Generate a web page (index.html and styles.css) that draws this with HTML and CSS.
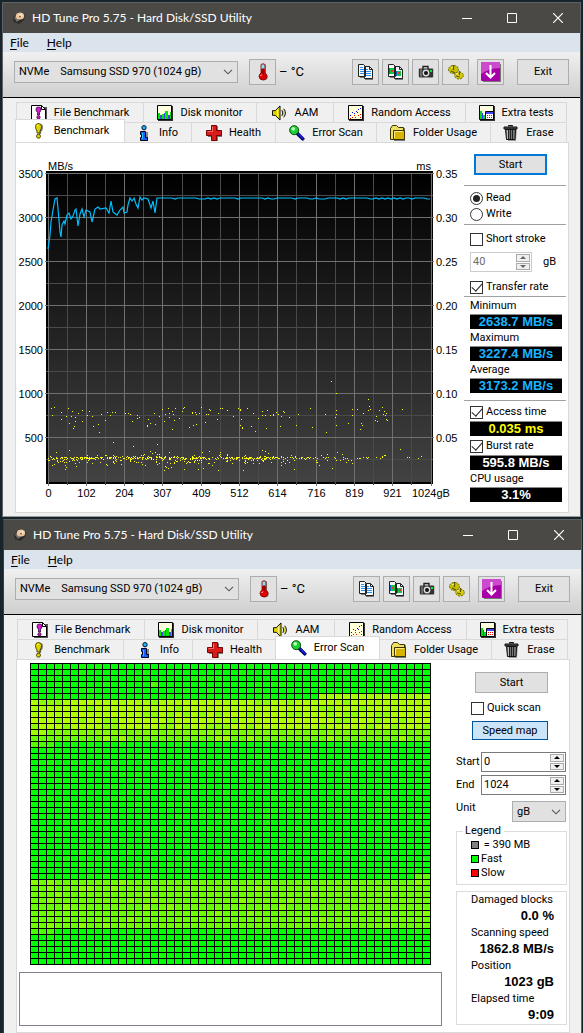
FILE: index.html
```html
<!DOCTYPE html>
<html lang="en">
<head>
<meta charset="utf-8">
<title>HD Tune Pro 5.75 - Hard Disk/SSD Utility</title>
<link rel="stylesheet" href="styles.css">
</head>
<body>
<svg class="sprites" aria-hidden="true">
  <symbol id="i-app" viewBox="0 0 16 16"><path d="M2 8l5-6 7 3-1 5-5 4-5-2z" fill="#2c2a29"/><path d="M3 8l4-5 4 5-5 4z" fill="#77706b"/><ellipse cx="9" cy="6" rx="4.2" ry="3.6" fill="#e9c49a"/><ellipse cx="9.5" cy="5.5" rx="2" ry="1.5" fill="#fff1d9"/><circle cx="9" cy="6.5" r="1" fill="#8a5a35"/></symbol>
  <symbol id="i-min" viewBox="0 0 10 10"><path d="M0 5.5h10" stroke="#fff"/></symbol>
  <symbol id="i-max" viewBox="0 0 10 10"><path d="M.5.5h9v9h-9z" fill="none" stroke="#fff"/></symbol>
  <symbol id="i-close" viewBox="0 0 10 10"><path d="M0 0l10 10M10 0L0 10" stroke="#fff" stroke-width="1.2"/></symbol>
  <symbol id="i-chev" viewBox="0 0 10 6"><path d="M1 .8l4 4 4-4" fill="none" stroke="#555" stroke-width="1.1"/></symbol>
  <symbol id="i-therm" viewBox="0 0 16 18"><path d="M6 1h4v9l2 3-1 3-3 1-3-1-1-3 2-3z" fill="#8d8d8d" transform="translate(1 .5)"/><path d="M6 1.5q2-1.500 4 0V10q2 1 2 3.500Q11.500 17 8 17t-4-3.500Q4 11 6 10z" fill="#e00000" stroke="#800000" stroke-width=".8"/><path d="M6.500 1.500h3V6h-3z" fill="#7fe5f5"/><path d="M8 5v7" stroke="#600" stroke-width="1"/><path d="M5.500 13l1.500-1.500" stroke="#fff"/></symbol>
  <symbol id="i-copy" viewBox="0 0 16 16"><path d="M2 3h6l7 3v10H7v-2H2z" fill="#777"/><path d="M.5.500h5l2 2v10h-7zM6.500 2.500h5l3 3v9h-8z" fill="#f4faff" stroke="#222"/><path d="M11.500 2.500v3h3" fill="none" stroke="#222"/><path d="M2 3.500h3M2 5.500h4M2 7.500h4M2 9.500h4M8 5.500h2M8 7.500h5M8 9.500h5M8 11.500h5" stroke="#2890f0"/></symbol>
  <symbol id="i-copyimg" viewBox="0 0 16 16"><path d="M2 3h6l7 3v10H7v-2H2z" fill="#777"/><path d="M.5.500h5l2 2v10h-7zM6.500 2.500h5l3 3v9h-8z" fill="#f4f4ff" stroke="#222"/><path d="M11.500 2.500v3h3" fill="none" stroke="#222"/><path d="M1 4h5v6H1zM8 7h5v5H8z" fill="#10c840"/><path d="M3 6h2v2H3zM10 8h2v2h-2z" fill="#e33"/><path d="M1 4h1v6H1zM8 7h1v5H8z" fill="#06c"/></symbol>
  <symbol id="i-cam" viewBox="0 0 16 16"><path d="M5 5V2.500h5V5" fill="none" stroke="#222" stroke-width="1.400"/><rect x=".8" y="4.500" width="14.400" height="9" rx="1" fill="#333"/><path d="M2 5h2v8H2z" fill="#666"/><circle cx="8" cy="9" r="3.400" fill="#ddd"/><circle cx="8" cy="9" r="2" fill="#111"/><path d="M12 6h2v2h-2z" fill="#0e3"/></symbol>
  <symbol id="i-gears" viewBox="0 0 16 16"><ellipse cx="5.500" cy="5.500" rx="5" ry="4" fill="#c8c000" stroke="#6a6400" stroke-dasharray="2 1"/><ellipse cx="11" cy="11.500" rx="4.300" ry="3.500" fill="#d6cc10" stroke="#6a6400" stroke-dasharray="2 1"/><path d="M5.500 1v5M11.500 7v4M3 7l4 2M8 12l4 1" stroke="#5b5600" stroke-width="1.200"/><path d="M3 4l2-1M8 10l2-1" stroke="#fff68a"/></symbol>
  <symbol id="i-down" viewBox="0 0 20 20"><path d="M2 2h18v18H2z" fill="#777"/><rect width="19" height="19" rx="1" fill="#a800a8"/><path d="M0 0h19v6Q8 6 0 12z" fill="#cc4bcc"/><path d="M9.500 3v12M5 11l4.500 4.500L14 11" fill="none" stroke="#fff" stroke-width="2"/></symbol>
  <symbol id="i-filebench" viewBox="0 0 16 16"><path d="M2 2h14v14H2z" fill="#555"/><path d="M.5.500h10l4 4v10H.500z" fill="#fff" stroke="#000"/><path d="M10.500.500v4h4" fill="none" stroke="#000"/><path d="M5 4q0-2 2.500-2T10 4q0 2-1.500 3.500V10h-2V7.500Q5 6 5 4z" fill="#d21bd2" stroke="#300030" stroke-width=".8"/><circle cx="7.500" cy="12.300" r="1.600" fill="#d21bd2" stroke="#300030" stroke-width=".8"/></symbol>
  <symbol id="i-monitor" viewBox="0 0 16 16"><path d="M1 1h15v15H1z" fill="#333"/><path d="M.5.500h14v14H.500z" fill="#ffffe0" stroke="#000"/><path d="M1 8h2v6H1zM5 9h2v5H5zM8 6h3v8H8zM13 7h1v7h-1z" fill="#00e800"/><path d="M3 10h2v4H3zM7 8h1v6H7zM11 10h2v4h-2z" fill="#4545e8"/></symbol>
  <symbol id="i-sound" viewBox="0 0 17 16"><path d="M.5 5.500h3l5-5v15l-5-5h-3z" fill="#e0d400" stroke="#000"/><path d="M6 4v8" stroke="#fffbb0"/><path d="M11.500 4.500q2.500 3.500 0 7" fill="none" stroke="#e0d400"/><path d="M10.500 5q2 3 0 6M12.500 3.500q3.500 4.500 0 9" fill="none" stroke="#000"/></symbol>
  <symbol id="i-random" viewBox="0 0 16 16"><path d="M1 1h15v15H1z" fill="#333"/><path d="M.5.500h14v14H.500z" fill="#ffffd8" stroke="#000"/><path d="M2 10h1v1H2zM4 7h1v1H4zM6 8h1v1H6zM8 6h1v1H8zM10 4h1v1h-1zM12 3h1v1h-1zM9 7h1v1H9z" fill="#00f"/><path d="M2 13h1v1H2zM4 12h1v1H4zM6 10h1v1H6zM7 12h1v1H7zM10 10h1v1h-1zM12 9h1v1h-1zM12 12h1v1h-1z" fill="#f00"/></symbol>
  <symbol id="i-extra" viewBox="0 0 16 16"><path d="M1 1h15v15H1z" fill="#333"/><path d="M.5.500h14v14H.500z" fill="#ffffe0" stroke="#000"/><path d="M1 6h2v8H1zM4 10h2v4H4z" fill="#00d820"/><path d="M3 8h1v6H3z" fill="#33f"/><path d="M6.500 6.500h8v8h-8z" fill="#fff" stroke="#000"/><path d="M7 7h7v2H7z" fill="#44f"/><path d="M8 10h1v1H8zM10 10h1v1h-1zM12 10h1v1h-1zM8 12h1v1H8zM10 12h1v1h-1zM12 12h1v1h-1z" fill="#f00"/></symbol>
  <symbol id="i-bench" viewBox="0 0 16 16"><path d="M6 3q0-2 3-2t3 3-2 5v2H8V9Q6 6 6 3z" fill="#777"/><path d="M4.500 3.500q0-3 3-3t3 3Q10.500 6 9 8v2H6V8Q4.500 6 4.500 3.500z" fill="#ded600" stroke="#3d3b00" stroke-width=".9"/><circle cx="7.500" cy="13.200" r="2" fill="#ded600" stroke="#3d3b00" stroke-width=".9"/><path d="M6 3l1-1" stroke="#fff"/></symbol>
  <symbol id="i-info" viewBox="0 0 16 16"><path d="M5 7h7v9H5z" fill="#888"/><circle cx="8" cy="2.700" r="2.200" fill="#18b4ff" stroke="#001" stroke-width=".9"/><path d="M4.500 6.500h5v6h2v3h-7v-3h1v-3h-1z" fill="#1262ff" stroke="#001"/><path d="M6.500 8v6" stroke="#28c4ff"/></symbol>
  <symbol id="i-health" viewBox="0 0 16 16"><path d="M6 1h6v5h4v6h-4v4H6v-4H2V6h4z" fill="#777"/><path d="M5.500.500h5v5h5v5h-5v5h-5v-5h-5v-5h5z" fill="#d81c1c" stroke="#7a0000"/><path d="M6.500 1.500v5h-5" fill="none" stroke="#ff6c6c"/></symbol>
  <symbol id="i-scan" viewBox="0 0 17 17"><path d="M9 10l7 6" stroke="#777" stroke-width="3"/><path d="M8.500 8.500l7 7" stroke="#000070" stroke-width="3.500"/><path d="M10 9.500l5 5" stroke="#2030ff" stroke-width="1.200"/><circle cx="5.500" cy="5.500" r="4.800" fill="#18d030" stroke="#04480c"/><circle cx="4.500" cy="4" r="2" fill="#b4ffb4"/></symbol>
  <symbol id="i-folder" viewBox="0 0 16 16"><path d="M2 3h13v13H4z" fill="#777"/><path d="M.5 14.500v-11l2-3h4l2 2h5v12z" fill="#f0e060" stroke="#3c3400"/><path d="M3.500 5.500h11v9h-11z" fill="#d8b400" stroke="#3c3400"/><path d="M4.500 13V6.500H13" fill="none" stroke="#fff08a"/></symbol>
  <symbol id="i-trash" viewBox="0 0 16 16"><path d="M4 3h10l-1 13H5z" fill="#999"/><path d="M5.500 1.500V.500h4v1M1 2h13v2H1z" fill="#555" stroke="#111"/><path d="M2.500 4.500h10l-.5 10H3.500z" fill="#777" stroke="#111"/><path d="M5.500 5v9M7.500 5v9M9.500 5v9" stroke="#222"/><path d="M4.500 5v9" stroke="#bbb"/></symbol>
</svg>

<main class="desk">
<section class="window window-bench">
  <header class="title"><svg class="app"><use href="#i-app"/></svg><h1>HD Tune Pro 5.75 - Hard Disk/SSD Utility</h1>
    <div class="sys"><button aria-label="Minimize"><svg><use href="#i-min"/></svg></button><button aria-label="Maximize"><svg><use href="#i-max"/></svg></button><button aria-label="Close"><svg><use href="#i-close"/></svg></button></div></header>
  <nav class="menu"><button><u>F</u>ile</button><button><u>H</u>elp</button></nav>
  <div class="toolbar">
    <div class="combo drive"><select aria-label="Drive"><option>NVMe &nbsp;&nbsp; Samsung SSD 970 (1024 gB)</option></select><svg><use href="#i-chev"/></svg></div>
    <button class="btn tool" aria-label="Temperature"><svg class="therm"><use href="#i-therm"/></svg></button><span class="temp">– °C</span>
    <div class="tools"><button class="btn tool" aria-label="Copy text"><svg><use href="#i-copy"/></svg></button><button class="btn tool" aria-label="Copy image"><svg><use href="#i-copyimg"/></svg></button><button class="btn tool" aria-label="Save screenshot"><svg><use href="#i-cam"/></svg></button><button class="btn tool" aria-label="Options"><svg><use href="#i-gears"/></svg></button></div>
    <button class="btn tool" aria-label="Download"><svg class="down"><use href="#i-down"/></svg></button>
    <button class="btn exit">Exit</button>
  </div>
  <div class="tabs" role="tablist">
    <div class="tabrow upper"><button role="tab"><svg><use href="#i-filebench"/></svg>File Benchmark</button><button role="tab"><svg><use href="#i-monitor"/></svg>Disk monitor</button><button role="tab"><svg><use href="#i-sound"/></svg>AAM</button><button role="tab"><svg><use href="#i-random"/></svg>Random Access</button><button role="tab"><svg><use href="#i-extra"/></svg>Extra tests</button></div>
    <div class="tabrow lower"><button role="tab" aria-selected="true"><svg><use href="#i-bench"/></svg>Benchmark</button><button role="tab"><svg><use href="#i-info"/></svg>Info</button><button role="tab"><svg><use href="#i-health"/></svg>Health</button><button role="tab"><svg><use href="#i-scan"/></svg>Error Scan</button><button role="tab"><svg><use href="#i-folder"/></svg>Folder Usage</button><button role="tab"><svg><use href="#i-trash"/></svg>Erase</button></div>
  </div>
  <div class="panel">
    <svg class="chart" id="chart" viewBox="16 143 448 369" role="img" aria-label="Transfer rate and access time"></svg>
    <form class="side bench-side">
      <button type="button" class="btn start focus">Start</button>
      <fieldset class="group mode"><label class="row"><input type="radio" name="mode" checked>Read</label><label class="row"><input type="radio" name="mode">Write</label></fieldset>
      <div class="group stroke">
        <label class="row"><input type="checkbox">Short stroke</label>
        <div class="unitrow"><span class="spin off"><input type="text" value="40" disabled aria-label="Short stroke size"><span><button type="button" disabled aria-label="Up"><i></i></button><button type="button" disabled aria-label="Down"><i class="dn"></i></button></span></span>gB</div>
        <label class="row"><input type="checkbox" checked>Transfer rate</label>
      </div>
      <div class="group rates"><p>Minimum</p><output class="cyan">2638.7 MB/s</output><p>Maximum</p><output class="cyan">3227.4 MB/s</output><p>Average</p><output class="cyan">3173.2 MB/s</output></div>
      <div class="group access"><label class="row"><input type="checkbox" checked>Access time</label><output class="yellow">0.035 ms</output><label class="row"><input type="checkbox" checked>Burst rate</label><output>595.8 MB/s</output><p>CPU usage</p><output>3.1%</output></div>
    </form>
  </div>
</section>

<section class="window window-scan">
  <header class="title"><svg class="app"><use href="#i-app"/></svg><h1>HD Tune Pro 5.75 - Hard Disk/SSD Utility</h1>
    <div class="sys"><button aria-label="Minimize"><svg><use href="#i-min"/></svg></button><button aria-label="Maximize"><svg><use href="#i-max"/></svg></button><button aria-label="Close"><svg><use href="#i-close"/></svg></button></div></header>
  <nav class="menu"><button><u>F</u>ile</button><button><u>H</u>elp</button></nav>
  <div class="toolbar">
    <div class="combo drive"><select aria-label="Drive"><option>NVMe &nbsp;&nbsp; Samsung SSD 970 (1024 gB)</option></select><svg><use href="#i-chev"/></svg></div>
    <button class="btn tool" aria-label="Temperature"><svg class="therm"><use href="#i-therm"/></svg></button><span class="temp">– °C</span>
    <div class="tools"><button class="btn tool" aria-label="Copy text"><svg><use href="#i-copy"/></svg></button><button class="btn tool" aria-label="Copy image"><svg><use href="#i-copyimg"/></svg></button><button class="btn tool" aria-label="Save screenshot"><svg><use href="#i-cam"/></svg></button><button class="btn tool" aria-label="Options"><svg><use href="#i-gears"/></svg></button></div>
    <button class="btn tool" aria-label="Download"><svg class="down"><use href="#i-down"/></svg></button>
    <button class="btn exit">Exit</button>
  </div>
  <div class="tabs" role="tablist">
    <div class="tabrow upper"><button role="tab"><svg><use href="#i-filebench"/></svg>File Benchmark</button><button role="tab"><svg><use href="#i-monitor"/></svg>Disk monitor</button><button role="tab"><svg><use href="#i-sound"/></svg>AAM</button><button role="tab"><svg><use href="#i-random"/></svg>Random Access</button><button role="tab"><svg><use href="#i-extra"/></svg>Extra tests</button></div>
    <div class="tabrow lower"><button role="tab"><svg><use href="#i-bench"/></svg>Benchmark</button><button role="tab"><svg><use href="#i-info"/></svg>Info</button><button role="tab"><svg><use href="#i-health"/></svg>Health</button><button role="tab" aria-selected="true"><svg><use href="#i-scan"/></svg>Error Scan</button><button role="tab"><svg><use href="#i-folder"/></svg>Folder Usage</button><button role="tab"><svg><use href="#i-trash"/></svg>Erase</button></div>
  </div>
  <div class="panel">
    <div class="scan">
      <svg class="blocks" id="blocks" viewBox="0 0 401 302" role="img" aria-label="Speed map"></svg>
      <textarea class="log" readonly aria-label="Log"></textarea>
    </div>
    <form class="side scan-side">
      <button type="button" class="btn start">Start</button>
      <label class="row quick"><input type="checkbox">Quick scan</label>
      <button type="button" class="btn speed" aria-pressed="true">Speed map</button>
      <div class="fields">
        <label for="from">Start</label><span class="spin"><input type="text" id="from" value="0"><span><button type="button" aria-label="Up"><i></i></button><button type="button" aria-label="Down"><i class="dn"></i></button></span></span>
        <label for="to">End</label><span class="spin"><input type="text" id="to" value="1024"><span><button type="button" aria-label="Up"><i></i></button><button type="button" aria-label="Down"><i class="dn"></i></button></span></span>
        <label for="unit">Unit</label><span class="combo unit"><select id="unit"><option>gB</option></select><svg><use href="#i-chev"/></svg></span>
      </div>
      <fieldset class="legend"><legend>Legend</legend><p><i class="grey"></i>&nbsp;= 390 MB</p><p><i class="fast"></i>Fast</p><p><i class="slow"></i>Slow</p></fieldset>
      <dl class="stats"><dt>Damaged blocks</dt><dd>0.0 %</dd><dt>Scanning speed</dt><dd>1862.8 MB/s</dd><dt>Position</dt><dd>1023 gB</dd><dt>Elapsed time</dt><dd>9:09</dd></dl>
    </form>
  </div>
</section>
</main>
<script src="app.js"></script>
</body>
</html>
```
FILE: styles.css
```css
* { box-sizing: border-box; }
body { margin: 0; background: #17242c; font: 11px/16px Roboto, "Liberation Sans", sans-serif; color: #000; }
button, input, select, textarea { font: inherit; color: inherit; margin: 0; padding: 0; border: 0; background: none; border-radius: 0; }
p, h1, dl, dd, fieldset { margin: 0; padding: 0; border: 0; min-width: 0; }
.sprites { position: absolute; width: 0; height: 0; }
.desk { height: 100vh; overflow: hidden; padding: 2px 1px 0 2px; }

.window { background: #f0f0f0; border: 1px solid #5f6264; border-bottom-color: #9a9a9a; }
.window-bench { margin-right: 1px; padding-bottom: 3px; }
.window-scan { margin: 2px 0 0 1px; border-left-color: #3b3b3b; }

.title { display: flex; align-items: center; height: 30px; padding: 0 8px; background: #4b4946; color: #fff; }
.title h1 { flex: 1; margin-left: 5px; font: 12px/16px Lato, "Open Sans", sans-serif; }
.app { width: 16px; height: 16px; }
.sys { display: flex; }
.sys button { display: grid; place-items: center; width: 45px; height: 28px; }
.sys button:last-child { width: 29px; margin-left: 9px; }
.sys svg { width: 10px; height: 10px; }

.menu { display: flex; gap: 18px; height: 19px; padding: 0 7px; background: #dbe3ec; font: 12px/19px Lato, "Open Sans", sans-serif; }
.menu u { text-underline-offset: 2px; }

.toolbar { display: flex; align-items: center; height: 46px; padding: 0 11px 6px 11px; background: linear-gradient(#f0f0f0, #cfcfcf); border-bottom: 1px solid #000; }
.btn { background: #e1e1e1; border: 1px solid #adadad; text-align: center; }
.tool { display: grid; place-items: center; flex: none; width: 27px; height: 26px; }
.tool svg { width: 16px; height: 16px; }
.tool .therm { height: 18px; }
.tool .down { width: 20px; height: 20px; }
.exit { width: 52px; height: 26px; margin-left: 13px; }
.combo { position: relative; background: #e1e1e1; border: 1px solid #adadad; }
.combo select { width: 100%; height: 20px; padding-left: 4px; appearance: none; }
.combo svg { position: absolute; right: 4px; top: 7px; width: 10px; height: 6px; pointer-events: none; }
.drive { flex: 0 1 224px; margin-right: 11px; }
.temp { flex: 1; margin-left: 3px; font-size: 13px; }
.tools { display: flex; gap: 3px; margin-right: 8px; }

.tabs { padding: 4px 13px 0 13px; }
.tabrow { display: grid; border-left: 1px solid #d9d9d9; }
.upper { grid-template-columns: 127fr 113fr 77fr 132fr 101fr; }
.lower { grid-template-columns: 106fr 69fr 84fr 101fr 114fr 76fr; }
.tabrow button { display: flex; align-items: center; justify-content: center; gap: 7px; height: 20px; border: solid #d9d9d9; border-width: 1px 1px 0 0; white-space: nowrap; }
.tabrow svg { flex: none; width: 16px; height: 16px; }
.tabrow button[aria-selected] { z-index: 1; height: 23px; margin: -3px -2px 0; background: #fff; border-left-width: 1px; }

.panel { display: grid; grid-template-columns: minmax(0, 1fr) 104px; margin: 0 11px 0 12px; background: #fff; border: 1px solid #d9d9d9; }
.chart { display: block; width: 100%; }
.chart text { font: 11px "Liberation Sans", Arial, sans-serif; }

.row { display: flex; align-items: center; height: 16px; white-space: nowrap; }
.row input { flex: none; appearance: none; width: 13px; height: 13px; margin-right: 3px; border: 1px solid #333; background: #fff; display: grid; place-items: center; }
.row input[type=radio] { border-radius: 50%; }
.row input[type=radio]:checked::before { content: ""; width: 7px; height: 7px; border-radius: 50%; background: #222; }
.row input[type=checkbox]:checked::before { content: ""; width: 9px; height: 5px; margin-top: -3px; border: solid #222; border-width: 0 0 1px 1px; transform: rotate(-48deg); }
.start { display: block; width: 73px; height: 21px; line-height: 18px; }
.focus { border: 2px solid #0078d7; line-height: 16px; }
.spin { display: flex; height: 20px; border: 1px solid #7a7a7a; background: #fff; }
.spin input { flex: 1; width: 20px; min-width: 0; padding-left: 2px; }
.spin > span { display: grid; width: 16px; padding: 1px; gap: 1px; }
.spin button { display: grid; place-items: center; background: #f0f0f0; border: 1px solid #acacac; }
.spin i { border: 3px solid transparent; border-top: 0; border-bottom: 3px solid #000; }
.spin .dn { border-bottom: 0; border-top: 3px solid #000; }
.off { border-color: #ccc; color: #6d6d6d; }
.off i { border-bottom-color: #666; }
.off .dn { border-top-color: #666; }

.bench-side { padding-right: 2px; }
.bench-side .start { margin: 11px 0 10px 10px; }
.group { padding-left: 6px; border-top: 1px solid #a0a0a0; }
.mode { padding-top: 4px; height: 39px; }
.stroke { padding-top: 6px; height: 72px; }
.unitrow { display: flex; align-items: center; gap: 11px; margin: 5px 0 7px; }
.unitrow .spin { width: 62px; }
.rates { padding-top: 2px; height: 104px; }
.access { padding-top: 3px; }
.group p { line-height: 14px; margin-top: 2px; }
.group output { display: block; width: 92px; height: 15px; margin-top: 1px; border-top: 1px solid #888; background: #000; color: #fff; font: bold 13px/14px "Liberation Sans", Arial, sans-serif; text-align: center; }
.rates p:first-child { margin-top: 0; }
.access output + label { margin-top: 2px; }
.group .cyan { color: #18b4ff; }
.group .yellow { color: #ff0; }

.scan { padding: 3px 14px 6px 2px; }
.blocks { display: block; width: calc(100% - 22px); margin-left: 11px; }
.log { display: block; width: 100%; height: 54px; margin-top: 7px; border: 1px solid #82808c; resize: none; }
.window-scan .panel { grid-template-columns: minmax(0, 1fr) 113px; }
.scan-side { padding-top: 12px; }
.scan-side .start { margin-left: 19px; }
.quick { margin: 7px 0 5px 15px; }
.speed { display: block; width: 76px; height: 19px; margin-left: 16px; line-height: 16px; background: #cce4f7; border-color: #005499; }
.fields { display: grid; grid-template-columns: 25px 85px; row-gap: 3px; margin-top: 12px; line-height: 20px; }
.unit { justify-self: end; width: 54px; height: 21px; margin-top: 3px; }
.unit select { height: 19px; }
.legend { margin: 2px 2px 0 0; padding: 0 0 4px 14px; border: 1px solid #dcdcdc; line-height: 14px; }
.legend legend { margin-left: -8px; padding: 0 3px 0 2px; line-height: 14px; }
.legend p { display: flex; align-items: center; gap: 2px; }
.legend i { width: 8px; height: 8px; border: 1px solid #000; }
.grey { background: #808080; }
.fast { background: #0f0; }
.slow { background: #f00; }
.stats { margin: 6px 2px 0 0; padding: 0 12px 0 14px; border: 1px solid #dcdcdc; }
.stats dt { white-space: nowrap; }
.stats dd { margin-bottom: 1px; font: bold 13px/16px "Liberation Sans", Arial, sans-serif; text-align: right; }
```
FILE: app.js
```js
function random(seed) {
  return function () {
    seed = (seed * 1664525 + 1013904223) % 4294967296;
    return seed / 4294967296;
  };
}

function drawChart() {
  var r = random(57), s = '', i, x, y;
  s += '<defs><linearGradient id="fade" x2="0" y2="1"><stop stop-color="#000"/><stop offset="1" stop-color="#424242"/></linearGradient></defs>';
  s += '<rect x="46" y="171" width="387" height="313"/><rect x="48" y="173" width="383" height="309" fill="url(#fade)"/>';
  var minor = '', major = '', labels = '';
  var names = [0, 102, 204, 307, 409, 512, 614, 716, 819, 921];
  for (i = 0; i <= 20; i++) {
    x = 48 + Math.floor(i * 19.15) + 0.5;
    if (i % 2) minor += 'M' + x + ' 173V485'; else major += 'M' + x + ' 173V486';
    if (i % 2 === 0 && i < 20) labels += '<text x="' + x + '" y="497" text-anchor="middle">' + names[i / 2] + '</text>';
  }
  for (i = 0; i < 14; i++) {
    y = 173.5 + i * 22;
    if (i % 2) minor += 'M46 ' + y + 'H433';
    else {
      major += 'M45 ' + y + 'H434';
      labels += '<text x="43" y="' + (y + 4) + '" text-anchor="end">' + (3500 - i * 250) + '</text>';
      labels += '<text x="436" y="' + (y + 4) + '">' + (0.35 - i * 0.025).toFixed(2) + '</text>';
    }
  }
  s += '<path d="' + minor + '" stroke="#4a4a4a"/><path d="' + major + '" stroke="#707070"/>' + labels;
  s += '<text x="48" y="170">MB/s</text><text x="431" y="170" text-anchor="end">ms</text><text x="412" y="497">1024gB</text>';

  var line = '48,249 50,235 51,222 53,210 55,199 57,198 59,220 60,232 61,237 62,225 64,221 65,224 67,215 69,213 71,219 73,216 75,210 76,209 78,226 80,214 82,209 84,217 86,210 90,212 92,222 95,209 98,207 100,209 106,208 109,213 111,201 113,212 117,215 120,210 123,207 124,213 127,212 128,205 130,198 132,201 134,198 136,204 138,208 140,197 142,200 144,198 148,199 151,208 153,201 155,213 157,198';
  for (x = 160; x < 431; x += 3) line += ' ' + x + ',' + (r() < 0.25 ? 199 : 198);
  s += '<polyline points="' + line + '" fill="none" stroke="#00bfff" stroke-width="1.2"/>';

  var dots = '';
  function dot(px, py) { dots += 'M' + Math.round(px) + ' ' + Math.round(py) + 'h1v1h-1z'; }
  for (i = 0; i < 560; i++) {
    x = r() < 0.8 ? 48 + r() * 215 : 263 + Math.pow(r(), 1.5) * 125;
    y = r();
    dot(x, y < 0.45 ? 457 + Math.floor(r() * 2) : y < 0.86 ? 455 + r() * 8 : 450 + r() * 20);
  }
  for (i = 0; i < 135; i++) {
    x = r() < 0.8 ? 48 + r() * 240 : 288 + r() * 100;
    dot(x, i % 2 ? 407 + r() * 9 : 412 + r() * 20);
  }
  [[331, 381], [336, 393], [368, 399], [402, 409], [400, 449], [407, 457], [409, 457], [418, 458], [421, 456], [369, 406], [384, 411], [387, 420], [375, 420], [360, 429], [157, 444], [133, 446], [113, 442]].forEach(function (p) { dot(p[0], p[1]); });
  s += '<path d="' + dots + '" fill="#ff0" shape-rendering="crispEdges"/>';
  document.getElementById('chart').innerHTML = s;
}

function drawBlocks() {
  var r = random(11), s = '<rect width="401" height="302"/>', row, col, v, n;
  for (row = 0; row < 50; row++) {
    for (col = 0; col < 50; col++) {
      n = r();
      v = n < 0.12 ? 20 : 0;
      if (row === 5 && col >= 36) v = 165;
      if (row >= 6 && row <= 10) v = n < 0.25 - (8 - row) * 0.05 ? 140 : 165 + Math.floor(n * 16);
      if (row === 11) v = col < 2 ? 160 : 110 + Math.floor(n * 20);
      if (row === 12) v = n < 0.15 ? 150 : 105;
      if (row === 13 && col < 3) v = 85 - col * 12;
      if (row === 35 && col > 47) v = 95;
      if (row >= 36 && row <= 43) v = n < 0.06 ? 135 : 100 + Math.floor(n * 12);
      if (row === 44 && col < 3) v = 75;
      if (row === 3 && col === 15) v = 80;
      s += '<rect x="' + (col * 8 + 1) + '" y="' + (row * 6 + 1 + (row > 40 ? 1 : 0)) + '" width="7" height="' + (row === 40 ? 6 : 5) + '" fill="rgb(' + v + ',255,0)"/>';
    }
  }
  document.getElementById('blocks').innerHTML = s;
}

drawChart();
drawBlocks();
```
